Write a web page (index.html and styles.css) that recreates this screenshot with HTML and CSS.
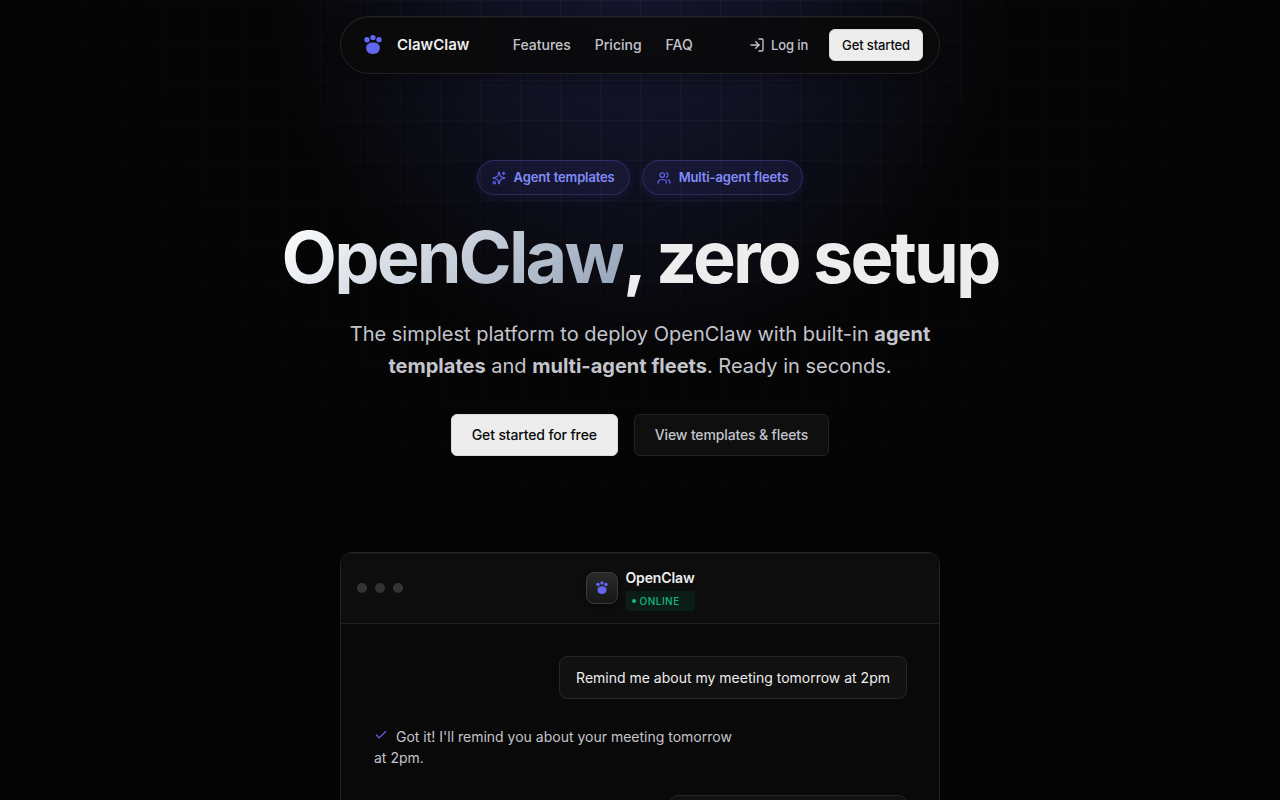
FILE: index.html
```html
<!DOCTYPE html>
<html lang="en">
<head>
    <meta charset="UTF-8">
    <meta name="viewport" content="width=device-width, initial-scale=1.0">
    <title>ClawClaw</title>
    <link rel="stylesheet" href="styles.css">
</head>
<body>
    <!-- paw shape shared by the logo and the chat avatar -->
    <svg class="symbols" aria-hidden="true">
        <symbol id="paw" viewBox="0 0 24 24">
            <circle cx="6" cy="6.7" r="2.7"/>
            <circle cx="12" cy="4.6" r="2.7"/>
            <circle cx="18" cy="6.7" r="2.7"/>
            <path d="M12 9.4c4.4 0 6.8 2 6.8 5.2 0 3.900-2.300 6.400-6.800 6.400s-6.800-2.500-6.800-6.400c0-3.200 2.400-5.200 6.800-5.200z"/>
        </symbol>
    </svg>

    <div class="backdrop"></div>

    <header class="site-header">
        <nav class="navbar">
            <a class="logo" href="#">
                <svg class="logo-mark" aria-hidden="true"><use href="#paw"/></svg>
                ClawClaw
            </a>
            <div class="nav-links">
                <a href="#features">Features</a>
                <a href="#pricing">Pricing</a>
                <a href="#faq">FAQ</a>
            </div>
            <div class="nav-actions">
                <a class="btn btn-small btn-ghost" href="#login">
                    <svg class="icon-login" viewBox="0 0 24 24" aria-hidden="true">
                        <path d="M15 3h4a2 2 0 0 1 2 2v14a2 2 0 0 1-2 2h-4"/>
                        <path d="m10 17 5-5-5-5"/>
                        <path d="M15 12H3"/>
                    </svg>
                    Log in
                </a>
                <a class="btn btn-small btn-primary" href="#signup">Get started</a>
            </div>
        </nav>
    </header>

    <main>
        <section class="hero">
            <div class="pills">
                <a class="pill" href="#templates">
                    <svg viewBox="0 0 24 24" aria-hidden="true">
                        <path d="M9.937 15.500A2 2 0 0 0 8.500 14.063l-6.135-1.582a.5.5 0 0 1 0-.962L8.500 9.936A2 2 0 0 0 9.937 8.500l1.582-6.135a.5.5 0 0 1 .963 0L14.063 8.500A2 2 0 0 0 15.500 9.937l6.135 1.581a.5.5 0 0 1 0 .964L15.500 14.063a2 2 0 0 0-1.437 1.437l-1.582 6.135a.5.5 0 0 1-.963 0z"/>
                        <path d="M20 2v4"/>
                        <path d="M22 4h-4"/>
                        <circle cx="4" cy="20" r="2"/>
                    </svg>
                    Agent templates
                </a>
                <a class="pill" href="#fleets">
                    <svg viewBox="0 0 24 24" aria-hidden="true">
                        <path d="M16 21v-2a4 4 0 0 0-4-4H6a4 4 0 0 0-4 4v2"/>
                        <circle cx="9" cy="7" r="4"/>
                        <path d="M22 21v-2a4 4 0 0 0-3-3.870"/>
                        <path d="M16 3.130a4 4 0 0 1 0 7.750"/>
                    </svg>
                    Multi-agent fleets
                </a>
            </div>
            <h1><span class="shine">OpenClaw</span>, zero setup</h1>
            <p class="lead">The simplest platform to deploy OpenClaw with built-in <strong>agent templates</strong> and <strong>multi-agent fleets</strong>. Ready in seconds.</p>
            <div class="hero-actions">
                <a class="btn btn-primary" href="#signup">Get started for free</a>
                <a class="btn btn-secondary" href="#templates">View templates &amp; fleets</a>
            </div>
        </section>

        <section class="chat">
            <div class="chat-header">
                <div class="dots"><span></span><span></span><span></span></div>
                <div class="agent">
                    <div class="avatar"><svg aria-hidden="true"><use href="#paw"/></svg></div>
                    <div class="agent-info">
                        <div class="agent-name">OpenClaw</div>
                        <div class="status">ONLINE</div>
                    </div>
                </div>
            </div>
            <div class="messages">
                <div class="message user">Remind me about my meeting tomorrow at 2pm</div>
                <div class="message bot">
                    <svg viewBox="0 0 24 24" aria-hidden="true"><path d="M20 6 9 17l-5-5"/></svg>Got it! I'll remind you about your meeting tomorrow at 2pm.
                </div>
                <div class="message user">What is on my calendar today?</div>
            </div>
        </section>
    </main>
</body>
</html>
```

FILE: styles.css
```css
* {
    box-sizing: border-box;
}
body {
    margin: 0;
    min-height: 100vh;
    background: #050505;
    color: #ededed;
    font-family: Inter, sans-serif;
    font-size: 14px;
    line-height: 21px;
    overflow-x: hidden;
}
a {
    color: inherit;
    text-decoration: none;
}
svg {
    fill: none;
    stroke: currentColor;
    stroke-width: 2;
    stroke-linecap: round;
    stroke-linejoin: round;
}
.symbols {
    position: absolute;
    width: 0;
    height: 0;
}

/* glow and grid behind the hero */
.backdrop {
    position: absolute;
    inset: 0;
    z-index: -1;
    background: radial-gradient(circle at 50% 0, rgba(99, 102, 241, 0.17) 0, rgba(99, 102, 241, 0.13) 140px, transparent 370px);
}
.backdrop::after {
    content: "";
    position: absolute;
    inset: 0;
    background-image:
        linear-gradient(to right, rgba(255, 255, 255, 0.035) 1px, transparent 1px),
        linear-gradient(to bottom, rgba(255, 255, 255, 0.035) 1px, transparent 1px);
    background-size: 40px 40px;
    mask-image: radial-gradient(ellipse 680px 600px at 50% 0, #000 0, transparent 100%);
}

/* navbar */
.site-header {
    padding: 16px 16px 0;
}
.navbar {
    display: flex;
    align-items: center;
    justify-content: space-between;
    max-width: 600px;
    margin: 0 auto;
    padding: 12px 16px 12px 20px;
    border: 1px solid #222224;
    border-radius: 32px;
    background: rgba(10, 10, 10, 0.9);
    box-shadow: 0 4px 16px rgba(0, 0, 0, 0.3), inset 0 1px 0 rgba(255, 255, 255, 0.05);
}
.logo {
    display: flex;
    align-items: center;
    gap: 12px;
    font-size: 15px;
    font-weight: 600;
    line-height: 20px;
}
.logo-mark {
    width: 24px;
    height: 24px;
    fill: #6366f1;
    stroke: none;
}
.nav-links {
    display: flex;
    gap: 24px;
    color: #c4c4cc;
    font-weight: 500;
    line-height: 20px;
}
.nav-actions {
    display: flex;
    gap: 8px;
}

/* buttons */
.btn {
    display: inline-flex;
    align-items: center;
    gap: 6px;
    height: 42px;
    padding: 0 20px;
    border: 1px solid transparent;
    border-radius: 6px;
    font-weight: 500;
    line-height: 20px;
    letter-spacing: -0.01em;
}
.btn-small {
    height: 32px;
    padding: 0 12px;
    font-size: 13px;
}
.btn-primary {
    background: #ededed;
    border-color: #dcdcdc;
    color: #0a0a0a;
}
.btn-secondary {
    background: #0f0f0f;
    border-color: #232323;
    color: #c4c4cc;
}
.btn-ghost {
    color: #c4c4cc;
}
.icon-login {
    width: 16px;
    height: 16px;
}

/* hero */
.hero {
    display: flex;
    flex-direction: column;
    align-items: center;
    padding: 86px 16px 96px;
    text-align: center;
}
.pills {
    display: flex;
    flex-wrap: wrap;
    justify-content: center;
    gap: 12px;
    margin-bottom: 24px;
}
.pill {
    display: flex;
    align-items: center;
    gap: 8px;
    padding: 6px 14px;
    border: 1px solid rgba(99, 102, 241, 0.25);
    border-radius: 18px;
    background: rgba(99, 102, 241, 0.1);
    box-shadow: 0 4px 12px rgba(99, 102, 241, 0.1);
    color: #818cf8;
    font-size: 13px;
    font-weight: 600;
    letter-spacing: -0.01em;
}
.pill svg {
    width: 14px;
    height: 14px;
    color: #6366f1;
}
h1 {
    margin: 0 0 24px;
    font-size: 72px;
    font-weight: 700;
    line-height: 75px;
    letter-spacing: -0.04em;
}
.shine {
    display: inline-block;
    background: linear-gradient(135deg, #fff 0%, #94a3b8 100%);
    background-clip: text;
    color: transparent;
}
.lead {
    max-width: 600px;
    margin: 0 0 32px;
    color: #c4c4cc;
    font-size: 20px;
    line-height: 32px;
}
.lead strong {
    font-weight: 700;
}
.hero-actions {
    display: flex;
    flex-wrap: wrap;
    justify-content: center;
    gap: 16px;
}

/* chat window */
.chat {
    max-width: 600px;
    margin: 0 auto 96px;
    border: 1px solid #222;
    border-radius: 12px;
    background: #090909;
    box-shadow: 0 8px 24px rgba(0, 0, 0, 0.4);
    overflow: hidden;
}
.chat-header {
    display: grid;
    grid-template-columns: 1fr auto 1fr;
    align-items: center;
    padding: 12px 16px;
    border-bottom: 1px solid #222;
    background: #0d0d0d;
    box-shadow: inset 0 1px 0 rgba(255, 255, 255, 0.05);
}
.dots {
    display: flex;
    gap: 8px;
}
.dots span {
    width: 10px;
    height: 10px;
    border-radius: 50%;
    background: #333;
}
.agent {
    display: flex;
    align-items: center;
    gap: 8px;
}
.avatar {
    display: flex;
    align-items: center;
    justify-content: center;
    width: 32px;
    height: 32px;
    border: 1px solid #3a3a3a;
    border-radius: 8px;
    background: linear-gradient(#2a2a2a, #171717);
    box-shadow: 0 2px 4px rgba(0, 0, 0, 0.4);
}
.avatar svg {
    width: 16px;
    height: 16px;
    fill: #6366f1;
    stroke: none;
}
.agent-name {
    font-weight: 600;
    line-height: 26px;
    letter-spacing: -0.01em;
}
.status {
    display: flex;
    align-items: center;
    gap: 4px;
    padding: 0 6px;
    border-radius: 3px;
    background: #0c1d17;
    color: #10b981;
    font-size: 10px;
    font-weight: 500;
    line-height: 20px;
    letter-spacing: 0.05em;
}
.status::before {
    content: "";
    width: 4px;
    height: 4px;
    border-radius: 50%;
    background: currentColor;
}
.messages {
    display: flex;
    flex-direction: column;
    gap: 24px;
    padding: 32px;
}
.message {
    border: 1px solid transparent;
}
.user {
    align-self: flex-end;
    padding: 10px 16px;
    border-color: #262626;
    border-radius: 8px;
    background: #111;
}
.bot {
    align-self: flex-start;
    max-width: 70%;
    padding: 2px 0;
    color: #c4c4cc;
}
.bot svg {
    width: 14px;
    height: 14px;
    margin-right: 8px;
    color: #6366f1;
}
```
